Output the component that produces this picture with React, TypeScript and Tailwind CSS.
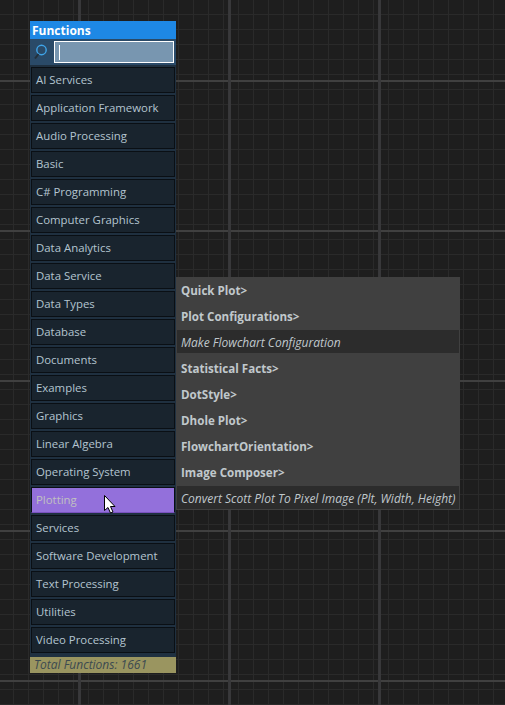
const items = ["AI Services","Application Framework","Audio Processing","Basic","C# Programming","Computer Graphics","Data Analytics","Data Service","Data Types","Database","Documents","Examples","Graphics","Linear Algebra","Operating System","Plotting","Services","Software Development","Text Processing","Utilities","Video Processing"];
const menu: [string, boolean][] = [["Quick Plot>",false],["Plot Configurations>",false],["Make Flowchart Configuration",true],["Statistical Facts>",false],["DotStyle>",false],["Dhole Plot>",false],["FlowchartOrientation>",false],["Image Composer>",false],["Convert Scott Plot To Pixel Image (Plt, Width, Height)",true]];

export default function App() {
  return (
    <div className="relative h-[705px] w-[505px] overflow-hidden bg-[#1e1e1e] bg-[linear-gradient(to_right,transparent_78px,#363638_78px,#3a3a3c_80px,#363638_81px,transparent_81px),linear-gradient(to_bottom,transparent_80px,#404040_80px,#404040_82px,transparent_82px),linear-gradient(to_right,#2a2a2a_1px,transparent_1px),linear-gradient(to_bottom,#2a2a2a_1px,transparent_1px)] bg-[length:150px_150px,150px_150px,15px_15px,15px_15px] bg-[position:0_0,0_0,13px_0,0_14px] pl-[30px] pt-[21px] font-['Open_Sans','Noto_Sans',sans-serif]">
      <div className="flex w-[146px] flex-col bg-[#1f3040]">
        <div className="h-[18px] bg-[#1e88e5] pl-[2px] pt-px text-[12px] leading-[18px] font-bold text-white">Functions</div>
        <div className="flex h-[26px] items-center bg-[#2a4a68] pl-[4px]">
          <svg width="16" height="18" viewBox="0 0 16 18" fill="none">
            <circle cx="7.5" cy="7" r="4.7" stroke="#3fa4e8" strokeWidth="1.4" />
            <path d="M4.5 11 L1 15.5" stroke="#24303a" strokeWidth="2" />
          </svg>
          <div className="ml-[4px] flex h-[22px] w-[120px] items-center border border-white bg-[#7896b0] pl-[4px]">
            <div className="h-[15px] w-px bg-white" />
          </div>
        </div>
        <div className="flex flex-col gap-[2px] px-px pt-[2px]">
          {items.map((t) => (
            <div key={t} className={`h-[26px] border pl-[4px] text-[11.4px] leading-[24px] ${t === "Plotting" ? "border-[#0a0f14] border-b-[#7a52c0] bg-[#9370db] text-[#c0c0c0]" : "border-[#0a0f14] bg-[#19242e] text-[#b4c4d0]"}`}>{t}</div>
          ))}
        </div>
        <div className="mt-[4px] h-[16px] bg-[#9a9560] pl-[4px] text-[12px] leading-[16px] text-[#3c4a50] italic">Total Functions: 1661</div>
      </div>
      <div className="absolute left-[176px] top-[277px] flex h-[233px] w-[284px] flex-col bg-[#404040] px-px">
        {menu.map(([t, it]) => (
          <div key={t} className={`shrink-0 pl-[4px] text-[#c0c8cc] ${it ? "mt-px mb-[2px] h-[23px] bg-[#2c2c2c] text-[12px] leading-[26px] italic" : "h-[26px] pt-px text-[11.6px] leading-[26px] font-bold"}`}>{t}</div>
        ))}
      </div>
      <svg className="absolute left-[104px] top-[495px]" width="12" height="19" viewBox="0 0 12 19">
        <path d="M0.5 0.5 V15.5 L4 12.5 L6.5 18 L9 17 L6.5 11.5 H11 Z" fill="#fff" stroke="#000" strokeWidth="1" />
      </svg>
    </div>
  );
}
